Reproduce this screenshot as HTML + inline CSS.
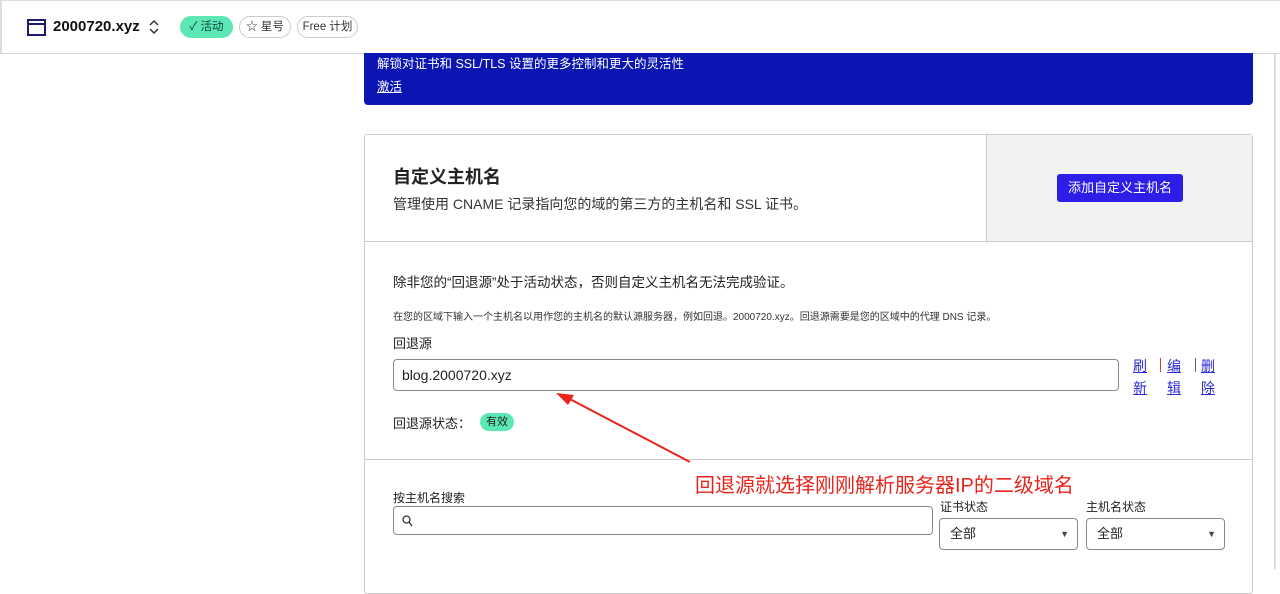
<!DOCTYPE html>
<html><head><meta charset="utf-8"><style>
*{box-sizing:border-box;margin:0;padding:0}
body{width:1280px;height:569px;overflow:hidden;background:#fff;font-family:"Liberation Sans","Noto Sans CJK SC",sans-serif;color:#222;position:relative}
.abs{position:absolute}
.top{left:0;top:0;width:1280px;height:54px;border-top:1px solid #ddd;border-bottom:1px solid #d5d5d5;border-left:2px solid #ddd}
.pill{position:absolute;top:16px;height:22px;border-radius:11px;font-size:11.5px;line-height:20px;text-align:center;border:1px solid #ccc;color:#333;white-space:nowrap}
.card{left:364px;top:134px;width:889px;height:460px;border:1px solid #ccc;border-radius:3px}
.lnk{font-size:14px;color:#2a2ad0;text-decoration:underline;line-height:22px}
.sel{position:absolute;top:518px;height:32px;border:1px solid #888;border-radius:4px;font-size:13px;line-height:30px;padding-left:10px}
.sel::after{content:"▼";position:absolute;right:8px;font-size:9px;color:#444}
</style></head><body>
<div class="abs top"></div>
<div class="abs" style="left:1274px;top:54px;width:2px;height:515px;background:#ddd"></div>
<svg class="abs" style="left:27px;top:19px" width="19" height="17"><rect x="1" y="1" width="17" height="15" fill="none" stroke="#1c1c6e" stroke-width="2"/><line x1="1" y1="5" x2="18" y2="5" stroke="#1c1c6e" stroke-width="2"/></svg>
<div class="abs" style="left:53px;top:18px;font-size:15px;font-weight:bold;color:#111">2000720.xyz</div>
<svg class="abs" style="left:148px;top:19px" width="12" height="16"><path d="M2 6 L6 2 L10 6 M2 10 L6 14 L10 10" fill="none" stroke="#333" stroke-width="1.5"/></svg>
<div class="pill" style="left:180px;width:53px;background:#5ce8b4;border-color:#5ce8b4;color:#144">✓ 活动</div>
<div class="pill" style="left:239px;width:52px">☆ 星号</div>
<div class="pill" style="left:297px;width:61px">Free 计划</div>
<div class="abs" style="left:364px;top:53px;width:889px;height:52px;background:#0b15b1;border-radius:0 0 4px 4px;color:#fff;font-size:12.5px;padding:0 13px">
<div style="margin-top:0px">解锁对证书和 SSL/TLS 设置的更多控制和更大的灵活性</div>
<div style="margin-top:4px;text-decoration:underline">激活</div></div>
<div class="abs card"></div>
<div class="abs" style="left:986px;top:135px;width:266px;height:106px;background:#f2f2f2;border-left:1px solid #ccc"></div>
<div class="abs" style="left:365px;top:241px;width:887px;height:1px;background:#ccc"></div>
<div class="abs" style="left:365px;top:459px;width:887px;height:1px;background:#ccc"></div>
<div class="abs" style="left:393px;top:163px;font-size:18px;font-weight:bold;color:#222">自定义主机名</div>
<div class="abs" style="left:393px;top:194px;font-size:14px;color:#333">管理使用 CNAME 记录指向您的域的第三方的主机名和 SSL 证书。</div>
<div class="abs" style="left:1057px;top:174px;width:126px;height:28px;background:#2c1ee6;border-radius:3px;color:#fff;font-size:13px;line-height:28px;text-align:center">添加自定义主机名</div>
<div class="abs" style="left:393px;top:271px;font-size:13.5px">除非您的“回退源”处于活动状态，否则自定义主机名无法完成验证。</div>
<div class="abs" style="left:393px;top:308px;font-size:10px;color:#333">在您的区域下输入一个主机名以用作您的主机名的默认源服务器，例如回退。2000720.xyz。回退源需要是您的区域中的代理 DNS 记录。</div>
<div class="abs" style="left:393px;top:333px;font-size:13px">回退源</div>
<div class="abs" style="left:393px;top:359px;width:726px;height:32px;border:1px solid #888;border-radius:4px;font-size:14px;line-height:30px;padding-left:8px">blog.2000720.xyz</div>
<div class="abs lnk" style="left:1133px;top:355px;width:14px">刷新</div>
<div class="abs" style="left:1160px;top:358px;width:1px;height:14px;background:#c44"></div>
<div class="abs lnk" style="left:1167px;top:355px;width:14px">编辑</div>
<div class="abs" style="left:1195px;top:358px;width:1px;height:14px;background:#666"></div>
<div class="abs lnk" style="left:1201px;top:355px;width:14px">删除</div>
<div class="abs" style="left:393px;top:413px;font-size:13px">回退源状态：</div>
<div class="abs" style="left:480px;top:413px;height:18px;padding:0 6px;background:#5ce8b4;border-radius:9px;font-size:11px;line-height:18px">有效</div>
<div class="abs" style="left:393px;top:489px;font-size:12px">按主机名搜索</div>
<div class="abs" style="left:393px;top:506px;width:540px;height:29px;border:1px solid #888;border-radius:4px"></div>
<svg class="abs" style="left:402px;top:515px" width="11" height="12"><circle cx="4.5" cy="4.5" r="3.5" fill="none" stroke="#333" stroke-width="1.3"/><line x1="7" y1="7" x2="10" y2="11" stroke="#333" stroke-width="1.3"/></svg>
<div class="abs" style="left:940px;top:498px;font-size:12px">证书状态</div>
<div class="abs" style="left:1086px;top:498px;font-size:12px">主机名状态</div>
<div class="sel" style="left:939px;width:139px">全部</div>
<div class="sel" style="left:1086px;width:139px">全部</div>
<svg class="abs" style="left:0;top:0" width="1280" height="569"><line x1="690" y1="462" x2="566" y2="397" stroke="#e8241c" stroke-width="2"/><path d="M556 393 L574 395 L568 405 Z" fill="#e8241c"/></svg>
<div class="abs" style="left:695px;top:469px;font-size:20px;color:#e8241c">回退源就选择刚刚解析服务器IP的二级域名</div>
</body></html>
